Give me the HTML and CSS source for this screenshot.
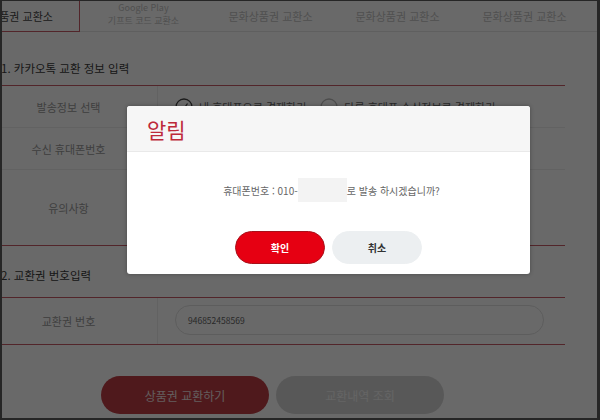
FILE: index.html
```html
<!DOCTYPE html>
<html lang="ko">
<head>
    <meta charset="UTF-8">
    <meta name="viewport" content="width=device-width, initial-scale=1.0">
    <title>상품권 교환소</title>
    <link rel="stylesheet" href="styles.css">
</head>
<body>
    <div class="screen">
        <div class="page">
            <div class="tabs">
                <div class="tab active first">상품권 교환소</div>
                <div class="tab two-line"><span>Google Play</span><span>기프트 코드 교환소</span></div>
                <div class="tab">문화상품권 교환소</div>
                <div class="tab">문화상품권 교환소</div>
                <div class="tab">문화상품권 교환소</div>
            </div>

            <div class="content">
                <h3 class="section-title first-title">1. 카카오톡 교환 정보 입력</h3>
                <div class="form-table">
                    <div class="row row-short">
                        <div class="label">발송정보 선택</div>
                        <div class="field">
                            <span class="radio checked">
                                <svg width="18" height="18" viewBox="0 0 18 18"><circle cx="9" cy="9" r="8" fill="none" stroke="#444" stroke-width="1.3"/><path d="M5.5 9.5 L8 12 L12.5 5.5" fill="none" stroke="#444" stroke-width="1.3"/></svg>
                                내 휴대폰으로 결제하기
                            </span>
                            <span class="radio">
                                <svg width="18" height="18" viewBox="0 0 18 18"><circle cx="9" cy="9" r="8" fill="none" stroke="#bbb" stroke-width="1.3"/></svg>
                                다른 휴대폰 수신정보로 결제하기
                            </span>
                        </div>
                    </div>
                    <div class="row row-short">
                        <div class="label">수신 휴대폰번호</div>
                        <div class="field"></div>
                    </div>
                    <div class="row row-tall">
                        <div class="label">유의사항</div>
                        <div class="field"></div>
                    </div>
                </div>

                <h3 class="section-title">2. 교환권 번호입력</h3>
                <div class="form-table">
                    <div class="row row-code">
                        <div class="label">교환권 번호</div>
                        <div class="field">
                            <div class="code-input">946852458569</div>
                        </div>
                    </div>
                </div>

                <div class="actions">
                    <button class="btn btn-red">상품권 교환하기</button>
                    <button class="btn btn-gray">교환내역 조회</button>
                </div>
            </div>
        </div>

        <div class="overlay"></div>

        <div class="modal">
            <div class="modal-header">알림</div>
            <div class="modal-body">
                <p class="message">휴대폰번호 : 010-<span class="masked"></span>로 발송 하시겠습니까?</p>
                <div class="modal-buttons">
                    <button class="modal-btn ok">확인</button>
                    <button class="modal-btn cancel">취소</button>
                </div>
            </div>
        </div>
    </div>
</body>
</html>
```

FILE: styles.css
```css
body {
    margin: 0;
    background-color: #fff;
    font-family: "Noto Sans CJK KR", "Noto Sans", sans-serif;
}

.screen {
    position: relative;
    width: 600px;
    height: 420px;
    box-sizing: border-box;
    border-style: solid;
    border-color: #262626;
    border-width: 1px 3px 2px 2px;
    overflow: hidden;
    background-color: #fff;
}

.page {
    width: 640px;
}

/* 상단 탭 */
.tabs {
    display: flex;
    height: 31px;
    margin-left: -40px;
    border-bottom: 1px solid #e6e6e6;
    box-sizing: border-box;
}
.tab {
    width: 127px;
    flex: none;
    display: flex;
    align-items: center;
    justify-content: center;
    font-size: 11px;
    color: #c2c2c2;
    white-space: nowrap;
}
.tab.first {
    width: 118px;
}
.tab.active {
    color: #444;
    border: 1px solid #c85a66;
    border-top: none;
    box-sizing: border-box;
    height: 31px;
}
.tab.two-line {
    flex-direction: column;
    justify-content: flex-start;
    font-size: 9px;
    line-height: 13px;
}
.tab.two-line span {
    display: block;
    height: 13px;
}

/* 입력 영역 */
.content {
    margin-left: -22px;
    width: 585px;
}
.section-title {
    margin: 0;
    padding-left: 21px;
    padding-bottom: 14px;
    height: 52px;
    display: flex;
    align-items: flex-end;
    font-size: 11.5px;
    font-weight: normal;
    color: #3a3a3a;
    border-bottom: 1px solid #c85a66;
    box-sizing: border-box;
}
.section-title.first-title {
    height: 54px;
    padding-bottom: 9px;
}
.form-table {
    border-bottom: 1px solid #c85a66;
}
.row {
    display: flex;
    border-bottom: 1px solid #ededed;
}
.row:last-child {
    border-bottom: none;
}
.row-short {
    height: 41px;
}
.row-tall {
    height: 75px;
}
.row-code {
    height: 46px;
}
.label {
    width: 177px;
    flex: none;
    display: flex;
    align-items: center;
    justify-content: center;
    font-size: 11px;
    color: #999;
    border-right: 1px solid #ededed;
}
.field {
    flex: 1;
    display: flex;
    align-items: center;
    gap: 14px;
    padding-left: 17px;
    font-size: 11px;
    color: #666;
}
.radio {
    display: flex;
    align-items: center;
    gap: 6px;
}
.radio svg {
    display: block;
}
.code-input {
    width: 369px;
    height: 30px;
    box-sizing: border-box;
    border: 1px solid #e2e2e2;
    border-radius: 15px;
    padding-left: 12px;
    display: flex;
    align-items: center;
    font-size: 8.5px;
    color: #666;
    margin-top: -2px;
}

.actions {
    display: flex;
    justify-content: center;
    gap: 7px;
    margin-top: 31px;
}
.btn {
    width: 168px;
    height: 38px;
    border: none;
    border-radius: 19px;
    font-family: inherit;
    font-size: 12px;
    color: #f0e0e0;
}
.btn-red {
    background-color: #bf3d44;
}
.btn-gray {
    background-color: #d6d6d6;
    color: #f4f4f4;
}

/* 팝업 */
.overlay {
    position: absolute;
    top: 0;
    left: 0;
    right: 0;
    bottom: 0;
    background-color: rgba(0, 0, 0, 0.59);
}
.modal {
    position: absolute;
    left: 125px;
    top: 105px;
    width: 403px;
    height: 168px;
    background-color: #fff;
    border-radius: 3px;
    overflow: hidden;
    box-shadow: 0 0 4px rgba(0, 0, 0, 0.3);
}
.modal-header {
    height: 46px;
    box-sizing: border-box;
    background-color: #f6f6f6;
    border-bottom: 1px solid #e9e9e9;
    padding-left: 20px;
    display: flex;
    align-items: center;
    font-size: 21px;
    color: #bd2a3a;
}
.modal-body {
    text-align: center;
}
.message {
    margin: 26px 0 0;
    height: 24px;
    display: flex;
    align-items: center;
    justify-content: center;
    font-size: 10px;
    color: #666;
    padding-left: 6px;
}
.masked {
    display: inline-block;
    width: 49px;
    height: 24px;
    background-color: #f3f3f3;
}
.modal-buttons {
    display: flex;
    justify-content: center;
    gap: 7px;
    margin-top: 29px;
}
.modal-btn {
    width: 90px;
    height: 33px;
    border-radius: 17px;
    font-family: inherit;
    font-size: 10px;
    font-weight: bold;
}
.modal-btn.ok {
    background-color: #e60012;
    border: 1px solid #a8101a;
    color: #fff;
}
.modal-btn.cancel {
    background-color: #eceff1;
    border: 1px solid #eceff1;
    color: #333;
}
```
